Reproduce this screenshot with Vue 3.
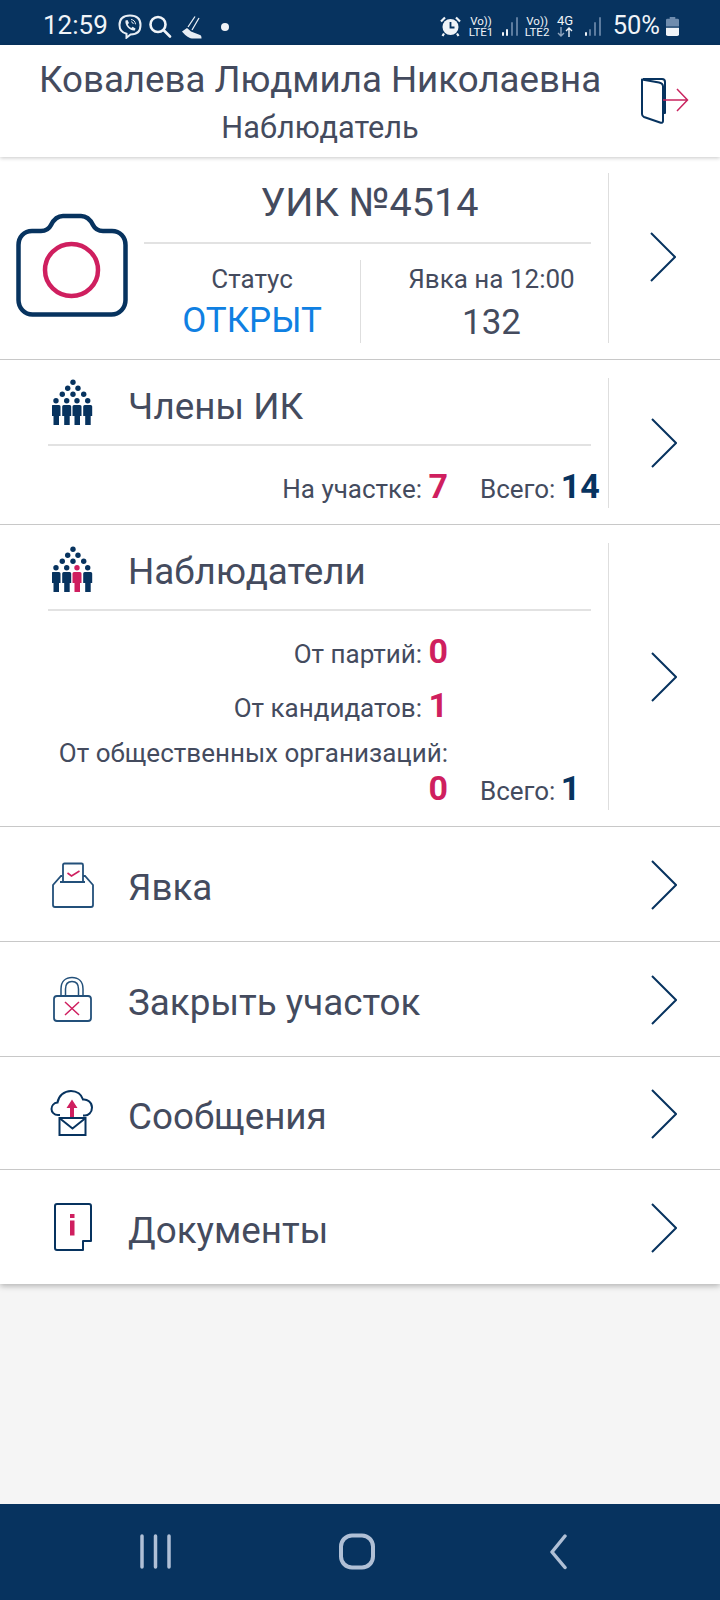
<script setup>
const bars = [4, 7, 14, 19]
const crowdDots = [
  [21, 4.300], [15.700, 10.300], [26, 10.300],
  [10.300, 16.300], [21, 16.300], [31.700, 16.300],
]
const people = [4, 14.700, 25, 35.700]
const personPath = (x) =>
  `M${x - 3} 27h6q1.500 0 1.500 1.500V38h-1.500v9h-5.500v-9H${x - 4.500}v-9.500q0-1.500 1.500-1.500z`
</script>

<template>
  <div class="page">
    <div class="status">
      <span class="time">12:59</span>
      <svg class="viber" width="24" height="25" viewBox="0 0 24 25" fill="none" stroke="#e8eef5" stroke-width="2">
        <path d="M12 1.500c6 0 10.500 2.500 10.500 9.500 0 7-4.500 9.500-10 9.500l-4 3.200v-4C3.500 18.500 1.500 15.500 1.500 11 1.500 4 6 1.500 12 1.500z" />
        <path d="M7.500 6.500l2-.5 1.500 3-1.200 1.200c.6 1.700 1.800 3 3.500 3.800l1.300-1.200 2.900 1.700-.6 1.900c-4.800 1-10.300-5-9.400-9.900z" fill="#e8eef5" stroke="none" />
        <path d="M13 5.500c2.600.2 4.300 2 4.500 4.800M13.200 7.800c1.200.1 1.900.9 2 2.200" stroke-width="1" />
      </svg>
      <svg class="search" width="24" height="23" viewBox="0 0 24 23" fill="none" stroke="#f0f4f8" stroke-width="2.600">
        <circle cx="10" cy="9.500" r="7.500" />
        <path d="M15.500 15l6.500 6.500" stroke-linecap="round" />
      </svg>
      <svg class="shoe" width="22" height="23" viewBox="0 0 22 23" fill="none">
        <path d="M14 0.500L7 11M18 2L11 14" stroke="#e8eef5" stroke-width="1.300" />
        <path d="M1 15.500L6 12l4 3.500 9 3.500c1.500.6 1.500 2 1.500 3.500H11C7 22 3 18 1 15.500z" fill="#e8eef5" />
      </svg>
      <span class="dot"></span>
      <span class="grow"></span>
      <svg class="alarm" width="21" height="21" viewBox="0 0 21 21">
        <circle cx="10.500" cy="11" r="8" fill="#f0f4f8" />
        <path d="M10.500 6v5.500h4" fill="none" stroke="#07335f" stroke-width="1.800" />
        <path d="M1 5.500L5 1.500M20 5.500l-4-4M4 17.500L2.500 20M17 17.500l1.500 2.500" stroke="#f0f4f8" stroke-width="2.200" />
      </svg>
      <span class="net net-one"><b>Vo))</b><b>LTE1</b></span>
      <span class="signal sig-one">
        <i v-for="(h, n) in bars" :key="n" :class="{ on: n < 2 }" :style="{ height: h + 'px' }"></i>
      </span>
      <span class="net net-two"><b>Vo))</b><b>LTE2</b></span>
      <span class="net net-g">
        <b class="four">4G</b>
        <svg class="updown" width="16" height="10" viewBox="0 0 16 10" fill="none" stroke-width="1.400">
          <path d="M4 0v9M1 6l3 3 3-3" stroke="#8fa5be" />
          <path d="M12 10V1M9 4l3-3 3 3" stroke="#f0f4f8" />
        </svg>
      </span>
      <span class="signal sig-two">
        <i v-for="(h, n) in bars" :key="n" :class="{ on: n < 1 }" :style="{ height: h + 'px' }"></i>
      </span>
      <span class="pct">50%</span>
      <svg class="battery" width="13" height="19" viewBox="0 0 14 22" preserveAspectRatio="none">
        <path d="M4 0h6v2h2.500q1.500 0 1.500 1.500V11H0V3.500Q0 2 1.500 2H4z" fill="#6f8cad" />
        <path d="M0 12.500h14V20q0 2-2 2H2q-2 0-2-2z" fill="#f0f4f8" />
      </svg>
    </div>

    <header class="head">
      <div class="who">
        <div class="name">Ковалева Людмила Николаевна</div>
        <div class="role">Наблюдатель</div>
      </div>
      <svg class="exit" width="50" height="50" viewBox="0 0 50 50" fill="none">
        <path d="M2 2.500l17 3q4 .8 4 4V44q0 2.500-3 1.500L4 40q-2-.8-2-3V2.500zM3 2h19q3 0 3 3v31h-2" stroke="#07335f" stroke-width="2" stroke-linejoin="round" />
        <path d="M23 23h24M37 12l10.500 11L37 34" stroke="#c9245f" stroke-width="1.500" />
      </svg>
    </header>

    <main class="list">
      <section class="row uik">
        <svg class="camera" width="114" height="106" viewBox="0 0 114 106" fill="none">
          <path d="M17 18h9c5 0 8-2 10-6 3-6 6-9 12-9h18c6 0 9 3 12 9 2 4 5 6 10 6h9c8 0 13.500 6 13.500 14v55c0 8-6 14.500-14 14.500H17.500c-8 0-14-6.500-14-14.500V32c0-8 5.500-14 13.500-14z" stroke="#07335f" stroke-width="4.500" />
          <ellipse cx="56.500" cy="57" rx="26.500" ry="26" stroke="#cf1f5f" stroke-width="4.500" />
        </svg>
        <div class="uik-main">
          <h1 class="uik-title">УИК №4514</h1>
          <div class="uik-stats">
            <div class="uik-col left">
              <span class="small">Статус</span>
              <span class="open">ОТКРЫТ</span>
            </div>
            <div class="uik-col right">
              <span class="small">Явка на 12:00</span>
              <span class="count">132</span>
            </div>
          </div>
        </div>
        <div class="go bordered">
          <svg class="chev lift" width="26" height="50" viewBox="0 0 26 50" fill="none"><path d="M1 1l24 24L1 49" stroke="#07335f" stroke-width="2" /></svg>
        </div>
      </section>

      <section class="row members">
        <div class="main">
          <div class="title-line">
            <svg class="crowd" width="42" height="48" viewBox="0 0 42 48">
              <g fill="#07335f">
                <circle v-for="(d, n) in crowdDots" :key="n" :cx="d[0]" :cy="d[1]" r="2.700" />
                <g v-for="x in people" :key="x">
                  <circle :cx="x" cy="22.700" r="2.700" />
                  <path :d="personPath(x)" />
                </g>
              </g>
            </svg>
            <h2 class="title">Члены ИК</h2>
          </div>
          <div class="stats one">
            <div class="lhs">На участке: <b class="red">7</b></div>
            <div class="rhs">Всего: <b class="navy">14</b></div>
          </div>
        </div>
        <div class="go bordered">
          <svg class="chev" width="26" height="50" viewBox="0 0 26 50" fill="none"><path d="M1 1l24 24L1 49" stroke="#07335f" stroke-width="2" /></svg>
        </div>
      </section>

      <section class="row observers">
        <div class="main">
          <div class="title-line">
            <svg class="crowd" width="42" height="48" viewBox="0 0 42 48">
              <g fill="#07335f">
                <circle v-for="(d, n) in crowdDots" :key="n" :cx="d[0]" :cy="d[1]" r="2.700" />
                <g v-for="x in people" :key="x" :fill="x === 25 ? '#cf1f5f' : '#07335f'">
                  <circle :cx="x" cy="22.700" r="2.700" />
                  <path :d="personPath(x)" />
                </g>
              </g>
            </svg>
            <h2 class="title">Наблюдатели</h2>
          </div>
          <div class="stats many">
            <div class="lhs l1">От партий: <b class="red">0</b></div>
            <div class="lhs l2">От кандидатов: <b class="red">1</b></div>
            <div class="lhs l3">От общественных организаций:</div>
            <div class="lhs l4"><b class="red">0</b></div>
            <div class="rhs l4r">Всего: <b class="navy">1</b></div>
          </div>
        </div>
        <div class="go bordered">
          <svg class="chev" width="26" height="50" viewBox="0 0 26 50" fill="none"><path d="M1 1l24 24L1 49" stroke="#07335f" stroke-width="2" /></svg>
        </div>
      </section>

      <section class="row item i1">
        <svg class="ico" width="48" height="52" viewBox="0 0 48 52" fill="none">
          <path d="M14 18h-1l-8 9v20q0 2 2 2h36q2 0 2-2V27l-8-9h-2M12 24h25" stroke="#23507a" stroke-width="1.800" />
          <path d="M15 24V7q0-1.500 1.500-1.500h17q1.500 0 1.500 1.500v17" stroke="#23507a" stroke-width="1.800" />
          <path d="M19.500 15l4 3 8-5" stroke="#cf1f5f" stroke-width="1.600" />
        </svg>
        <h2 class="title">Явка</h2>
        <svg class="chev end" width="26" height="50" viewBox="0 0 26 50" fill="none"><path d="M1 1l24 24L1 49" stroke="#07335f" stroke-width="2" /></svg>
      </section>

      <section class="row item i2">
        <svg class="ico" width="48" height="52" viewBox="0 0 48 52" fill="none">
          <path d="M13 23V16C13 8 18 4.500 24 4.500S35 8 35 16v7M17.500 23v-7c0-5 2.500-7.500 6.500-7.500s6.500 2.500 6.500 7.500v7" stroke="#23507a" stroke-width="1.500" />
          <rect x="6" y="23" width="37" height="25" rx="3" stroke="#23507a" stroke-width="1.800" />
          <path d="M17 29l14 13M31 29L17 42" stroke="#cf1f5f" stroke-width="1.500" />
        </svg>
        <h2 class="title">Закрыть участок</h2>
        <svg class="chev end" width="26" height="50" viewBox="0 0 26 50" fill="none"><path d="M1 1l24 24L1 49" stroke="#07335f" stroke-width="2" /></svg>
      </section>

      <section class="row item i3">
        <svg class="ico" width="48" height="52" viewBox="0 0 48 52" fill="none">
          <path d="M12 28h-2C6 28 3.500 25 3.500 22s2-6 6-6.500C10.500 9 16 4 23 4c6 0 10.500 3.500 12 8.500 4-.5 9 2.500 9 8s-4 8-7 8h-2" stroke="#07335f" stroke-width="2" />
          <path d="M22 33V21h-3.500L24 12.500 29.500 21H26v12z" fill="#cf1f5f" />
          <rect x="11.500" y="31" width="26" height="17" stroke="#07335f" stroke-width="2" fill="#fff" />
          <path d="M12 31.500l12.500 10L37 31.500" stroke="#07335f" stroke-width="2" />
        </svg>
        <h2 class="title">Сообщения</h2>
        <svg class="chev end" width="26" height="50" viewBox="0 0 26 50" fill="none"><path d="M1 1l24 24L1 49" stroke="#07335f" stroke-width="2" /></svg>
      </section>

      <section class="row item i4">
        <svg class="ico" width="48" height="52" viewBox="0 0 48 52" fill="none">
          <path d="M9 3h32q2 0 2 2v35h-8v9H9q-2 0-2-2V5q0-2 2-2z" stroke="#07335f" stroke-width="2" stroke-linejoin="round" />
          <rect x="22" y="13" width="4.500" height="4" fill="#cf1f5f" />
          <rect x="22" y="19.500" width="4.500" height="15" fill="#cf1f5f" />
        </svg>
        <h2 class="title">Документы</h2>
        <svg class="chev end" width="26" height="50" viewBox="0 0 26 50" fill="none"><path d="M1 1l24 24L1 49" stroke="#07335f" stroke-width="2" /></svg>
      </section>
    </main>

    <div class="spacer"></div>

    <nav class="nav">
      <svg width="40" height="36" viewBox="0 0 40 36" stroke="#b0c0d6" stroke-width="3.500" stroke-linecap="round" fill="none">
        <path d="M7 2v31M20.500 2v31M34 2v31" />
      </svg>
      <svg width="40" height="38" viewBox="0 0 40 38" fill="none">
        <rect x="4" y="2.500" width="32" height="32" rx="11" stroke="#b0c0d6" stroke-width="4" />
      </svg>
      <svg width="40" height="36" viewBox="0 0 40 36" fill="none">
        <path d="M26 2L13 18l13 15.500" stroke="#b0c0d6" stroke-width="3.500" stroke-linecap="round" stroke-linejoin="round" />
      </svg>
    </nav>
  </div>
</template>

<style>
html, body { margin: 0; background: #f5f5f5; }
</style>

<style scoped>
.page {
  width: 720px;
  height: 1600px;
  display: flex;
  flex-direction: column;
  background: #f5f5f5;
  font-family: Roboto, "Noto Sans", sans-serif;
  color: #444b5e;
  overflow: hidden;
}
.status {
  height: 45px;
  flex: none;
  background: #07335f;
  display: flex;
  align-items: center;
  padding-left: 43px;
  color: #f0f4f8;
  box-sizing: border-box;
}
.time { font-size: 26px; line-height: 39px; width: 75px; margin-top: 6px; }
.viber { margin-right: 6px; margin-top: 8px; }
.search { margin-right: 9px; margin-top: 7px; }
.shoe { margin-top: 10px; }
.dot { width: 8px; height: 8px; border-radius: 50%; background: #f0f4f8; margin-left: 18px; margin-top: 9px; }
.grow { flex: 1; }
.alarm { margin-right: 7px; margin-top: 7px; }
.net { display: flex; flex-direction: column; align-items: center; font-size: 11.500px; line-height: 11px; margin-top: 9px; flex: none; }
.net b { font-weight: 400; white-space: nowrap; }
.net-one { width: 27px; }
.sig-one { margin-left: 7px; }
.net-two { width: 27px; margin-left: 6px; }
.net-g { width: 17px; margin-left: 6px; margin-top: 7px; }
.four { font-size: 13px; }
.updown { margin-top: 1px; }
.sig-two { margin-left: 11px; }
.signal { display: flex; align-items: flex-end; gap: 2.700px; height: 24px; margin-top: 3px; }
.signal i { width: 2px; background: #5d7c9f; border-radius: 1px; }
.signal i.on { background: #f0f4f8; }
.pct { font-size: 25.500px; margin-left: 12px; margin-right: 6px; line-height: 39px; margin-top: 6px; }
.battery { margin-right: 41px; margin-top: 8px; }

.head {
  height: 112px;
  flex: none;
  box-sizing: border-box;
  background: #fff;
  box-shadow: 0 1px 4px rgba(0, 0, 0, 0.22);
  display: flex;
  position: relative;
  z-index: 1;
}
.who { width: 640px; text-align: center; }
.name { font-size: 36.700px; line-height: 40px; margin-top: 15px; white-space: nowrap; }
.role { font-size: 30.700px; line-height: 34px; margin-top: 11px; }
.exit { margin-top: 32px; }

.list { background: #fff; box-shadow: 0 2px 6px rgba(0, 0, 0, 0.28); flex: none; }
.row { display: flex; box-sizing: border-box; border-bottom: 1px solid #c8c8c8; }
.go { width: 112px; flex: none; box-sizing: border-box; display: flex; align-items: center; padding-left: 42px; border-left: 1px solid #dedede; }
.lift { margin-top: -2px; margin-left: -1px; }

.uik { height: 203px; padding: 16px 0 16px; }
.camera { flex: none; margin-left: 15px; margin-top: 40px; }
.uik-main { width: 447px; margin-left: 15px; margin-right: 17px; display: flex; flex-direction: column; }
.uik-title { margin: 0; height: 71px; border-bottom: 2px solid #e2e2e2; box-sizing: border-box; text-align: center; font-size: 39.600px; font-weight: 400; line-height: 60px; padding-left: 4px; }
.uik-stats { flex: 1; display: flex; padding-top: 16px; }
.uik-col { display: flex; flex-direction: column; align-items: center; }
.left { width: 216px; border-right: 1px solid #dedede; }
.right { flex: 1; padding-left: 31px; }
.small { font-size: 26px; line-height: 30px; margin-top: 4px; white-space: nowrap; }
.open { font-size: 35px; line-height: 40px; color: #0f80e2; margin-top: 7px; }
.count { font-size: 35px; line-height: 40px; margin-top: 9px; }

.main { width: 608px; flex: none; box-sizing: border-box; padding-left: 48px; }
.title-line { width: 543px; height: 68px; border-bottom: 2px solid #e2e2e2; box-sizing: border-box; display: flex; }
.crowd { flex: none; margin-left: 4px; }
.observers .crowd { margin-top: 2px; }
.title { margin: 0; font-size: 36.800px; font-weight: 400; line-height: 44px; }
.title-line .title { margin-left: 34px; margin-top: 7px; }

.members { height: 165px; padding: 18px 0 15px; }
.members .go, .members .main { height: 130px; }
.observers { height: 302px; padding: 18px 0 16px; }
.stats { display: grid; grid-template-columns: 400px auto; column-gap: 32px; font-size: 26px; }
.lhs { text-align: right; grid-column: 1; white-space: nowrap; }
.rhs { grid-column: 2; white-space: nowrap; }
.stats b { font-size: 34px; font-weight: 700; }
.red { color: #cf1f5f; }
.navy { color: #07335f; margin-left: -1px; }
.one { padding-top: 20px; line-height: 40px; }
.many { line-height: 40px; padding-top: 20px; }
.l1 { height: 54px; }
.l2 { height: 46px; }
.l3 { height: 33px; line-height: 36px; margin-top: 4px; }
.l4 { grid-row: 4; }
.l4r { grid-row: 4; }

.item { align-items: center; padding-left: 48px; }
.i1 { height: 115px; }
.i2 { height: 115px; }
.i3 { height: 113px; }
.i4 { height: 114px; border-bottom: 0; }
.ico { flex: none; }
.item .title { margin-left: 32px; flex: 1; padding-top: 8px; }
.end { margin-right: 43px; margin-top: 2px; }

.spacer { flex: 1; }
.nav { height: 96px; flex: none; background: #07335f; display: flex; align-items: center; padding-left: 135px; gap: 162px; }
</style>
